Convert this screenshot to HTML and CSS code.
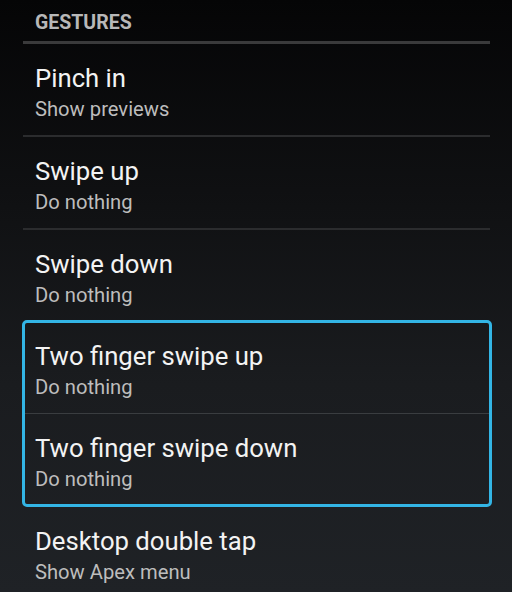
FILE: index.html
```html
<!DOCTYPE html>
<html>
<head>
<meta charset="utf-8">
<link rel="stylesheet" href="styles.css">
</head>
<body>
<div class="screen">
  <div class="section-header">GESTURES</div>
  <div class="list">
    <div class="row"><div class="title">Pinch in</div><div class="summary">Show previews</div></div>
    <div class="divider"></div>
    <div class="row"><div class="title">Swipe up</div><div class="summary">Do nothing</div></div>
    <div class="divider"></div>
    <div class="row"><div class="title">Swipe down</div><div class="summary">Do nothing</div></div>
    <div class="highlight">
      <div class="row inbox"><div class="title">Two finger swipe up</div><div class="summary">Do nothing</div></div>
      <div class="divider inner"></div>
      <div class="row inbox lower"><div class="title">Two finger swipe down</div><div class="summary">Do nothing</div></div>
    </div>
    <div class="row"><div class="title">Desktop double tap</div><div class="summary">Show Apex menu</div></div>
  </div>
</div>
</body>
</html>
```
FILE: styles.css
```css
html, body {
  margin: 0;
  padding: 0;
}
body {
  width: 512px;
  height: 592px;
  overflow: hidden;
  background: linear-gradient(to bottom, #050506 0%, #101113 35%, #1a1c1f 65%, #1f2226 100%);
  font-family: Roboto, "Noto Sans", sans-serif;
}
.screen {
  display: flex;
  flex-direction: column;
  padding: 0 22px 0 23px;
}
.section-header {
  height: 44px;
  box-sizing: border-box;
  padding: 12px 0 0 12px;
  font-size: 19.5px;
  font-weight: bold;
  line-height: 22px;
  color: #b8b8b8;
  border-bottom: 3px solid #3a3a3b;
}
.list {
  display: flex;
  flex-direction: column;
}
.row {
  height: 91px;
  box-sizing: border-box;
  padding: 19px 0 0 12px;
  display: flex;
  flex-direction: column;
}
.title {
  font-size: 25.7px;
  line-height: 30px;
  color: #f3f3f3;
}
.summary {
  font-size: 20.2px;
  line-height: 32px;
  color: #bdbdbd;
}
.divider {
  height: 2px;
  background: #2b2c2e;
}
.highlight {
  margin: -1px -2px 0 -1px;
  border: 3px solid #33b5e5;
  border-radius: 5px;
  display: flex;
  flex-direction: column;
}
.row.inbox {
  height: 90px;
  padding-top: 18px;
  padding-left: 10px;
}
.row.inbox.lower {
  padding-top: 19px;
}
.divider.inner {
  height: 1px;
  background: #3a3d40;
}
```
